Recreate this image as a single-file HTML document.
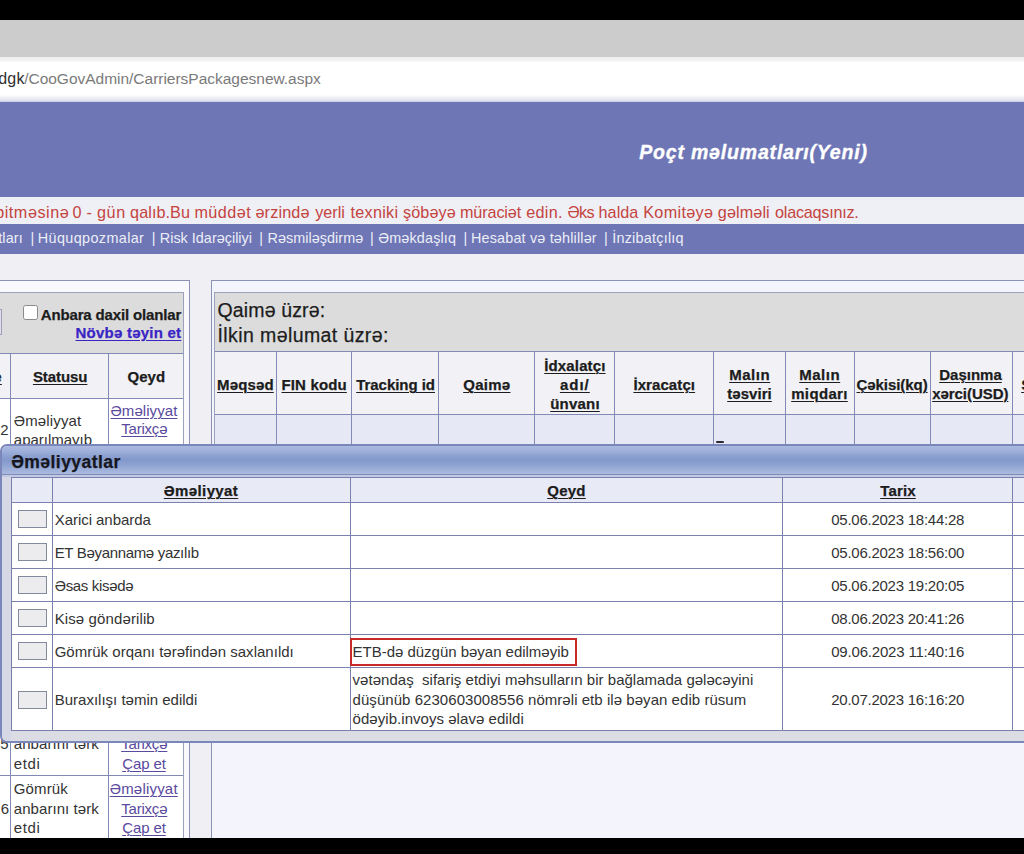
<!DOCTYPE html>
<html lang="az"><head><meta charset="utf-8"><title>Poçt məlumatları(Yeni)</title>
<style>
html,body{margin:0;padding:0;width:1024px;height:854px;overflow:hidden;}
#root{width:1024px;height:854px;overflow:hidden;position:relative;background:#f0f0f4;font-family:"Liberation Sans",Arial,sans-serif;}
.a{position:absolute;box-sizing:border-box;}
.t{position:absolute;white-space:nowrap;line-height:1;}
.btn{position:absolute;box-sizing:border-box;width:29px;height:18px;left:18px;background:#ececef;border:1px solid #838a9e;}
</style></head><body>
<div id="root">
<!-- browser chrome -->
<div class="a" style="left:0;top:0;width:1024px;height:20px;background:#000"></div>
<div class="a" style="left:0;top:20px;width:1024px;height:37px;background:#cccccc"></div>
<div class="a" style="left:0;top:57px;width:1024px;height:45px;background:linear-gradient(#ededed 0,#f4f4f4 4px,#ffffff 5px,#ffffff 38px,#f3f3f6 40px,#e4e6f0 43px,#c9cde4 45px)"></div>
<!-- app header -->
<div class="a" style="left:0;top:102px;width:1024px;height:95px;background:#6e76b5"></div>
<div class="a" style="left:0;top:197px;width:1024px;height:27px;background:#efeff6"></div>
<div class="a" style="left:0;top:224px;width:1024px;height:30px;background:#6e76b5"></div>

<!-- left panel -->
<div class="a" style="left:-10px;top:280px;width:200px;height:600px;background:#f8f8fd;border:1px solid #8c92b6"></div>
<div class="a" style="left:-10px;top:292px;width:194px;height:600px;background:#ffffff;border:1px solid #9da2bc"></div>
<div class="a" style="left:-10px;top:293px;width:193px;height:60px;background:#dcdcdc"></div>
<div class="a" style="left:-10px;top:309px;width:12px;height:26px;background:#dedeea;border:1px solid #a0a0bc"></div>
<div class="a" style="left:23px;top:305px;width:15px;height:15px;background:#fff;border:1px solid #8a8a8a;border-radius:2.5px"></div>
<div class="a" style="left:-10px;top:353px;width:193px;height:46px;background:#f2f2f6;border-top:1px solid #8289b4;border-bottom:1px solid #8289b4"></div>
<div class="a" style="left:10px;top:353px;width:1px;height:500px;background:#8289b4"></div>
<div class="a" style="left:108px;top:353px;width:1px;height:500px;background:#8289b4"></div>
<div class="a" style="left:-10px;top:775px;width:193px;height:1px;background:#8289b4"></div>

<!-- right panel -->
<div class="a" style="left:211px;top:280px;width:900px;height:600px;background:#f4f5fc;border:1px solid #8c92b6"></div>
<div class="a" style="left:214px;top:292px;width:900px;height:200px;background:#eceef8;border:1px solid #9da2bc"></div>
<div class="a" style="left:215px;top:293px;width:900px;height:58px;background:#dcdcdc"></div>
<div class="a" style="left:215px;top:351px;width:900px;height:64px;background:#f2f2f6;border-top:1px solid #8289b4;border-bottom:1px solid #8289b4"></div>
<div class="a" style="left:215px;top:415px;width:900px;height:40px;background:#e6e8f5"></div>
<div class="a" style="left:276px;top:351px;width:1px;height:100px;background:#8289b4"></div>
<div class="a" style="left:351px;top:351px;width:1px;height:100px;background:#8289b4"></div>
<div class="a" style="left:438px;top:351px;width:1px;height:100px;background:#8289b4"></div>
<div class="a" style="left:534px;top:351px;width:1px;height:100px;background:#8289b4"></div>
<div class="a" style="left:614px;top:351px;width:1px;height:100px;background:#8289b4"></div>
<div class="a" style="left:713px;top:351px;width:1px;height:100px;background:#8289b4"></div>
<div class="a" style="left:785px;top:351px;width:1px;height:100px;background:#8289b4"></div>
<div class="a" style="left:854px;top:351px;width:1px;height:100px;background:#8289b4"></div>
<div class="a" style="left:930px;top:351px;width:1px;height:100px;background:#8289b4"></div>
<div class="a" style="left:1012px;top:351px;width:1px;height:100px;background:#8289b4"></div>

<div class="a" style="left:716px;top:441px;width:8px;height:2px;background:#2a2a30;border-radius:1px"></div>

<span class="t" style="left:-1.80px;top:71.02px;font-size:16px;color:#303030;letter-spacing:0.268px;">dgk</span>
<span class="t" style="left:24.20px;top:71.02px;font-size:15.5px;color:#7a7a7a;letter-spacing:-0.017px;">/CooGovAdmin/CarriersPackagesnew.aspx</span>
<span class="t" style="left:639.20px;top:143.02px;font-size:19.5px;color:#ffffff;font-weight:bold;font-style:italic;letter-spacing:0.819px;-webkit-text-stroke:0.35px #fff;">Poçt məlumatları(Yeni)</span>
<span class="t" style="left:-4.80px;top:204.03px;font-size:16.2px;color:#c4443e;letter-spacing:0.524px;">bitməsinə</span>
<span class="t" style="left:72.40px;top:204.03px;font-size:16.2px;color:#c4443e;letter-spacing:0.384px;">0</span>
<span class="t" style="left:86.50px;top:204.03px;font-size:16.2px;color:#c4443e;letter-spacing:0.709px;">-</span>
<span class="t" style="left:96.90px;top:204.03px;font-size:16.2px;color:#c4443e;letter-spacing:0.628px;">gün</span>
<span class="t" style="left:130.10px;top:204.03px;font-size:16.2px;color:#c4443e;letter-spacing:0.062px;">qalıb.Bu</span>
<span class="t" style="left:194.40px;top:204.03px;font-size:16.2px;color:#c4443e;letter-spacing:0.450px;">müddət</span>
<span class="t" style="left:255.40px;top:204.03px;font-size:16.2px;color:#c4443e;letter-spacing:0.172px;">ərzində</span>
<span class="t" style="left:315.30px;top:204.03px;font-size:16.2px;color:#c4443e;letter-spacing:-0.038px;">yerli</span>
<span class="t" style="left:350.40px;top:204.03px;font-size:16.2px;color:#c4443e;letter-spacing:0.301px;">texniki</span>
<span class="t" style="left:403.00px;top:204.03px;font-size:16.2px;color:#c4443e;letter-spacing:0.099px;">şöbəyə</span>
<span class="t" style="left:460.00px;top:204.03px;font-size:16.2px;color:#c4443e;letter-spacing:-0.122px;">müraciət</span>
<span class="t" style="left:526.30px;top:204.03px;font-size:16.2px;color:#c4443e;letter-spacing:0.278px;">edin.</span>
<span class="t" style="left:567.40px;top:204.03px;font-size:16.2px;color:#c4443e;letter-spacing:-0.592px;">Əks</span>
<span class="t" style="left:598.60px;top:204.03px;font-size:16.2px;color:#c4443e;letter-spacing:0.018px;">halda</span>
<span class="t" style="left:643.20px;top:204.03px;font-size:16.2px;color:#c4443e;letter-spacing:0.327px;">Komitəyə</span>
<span class="t" style="left:717.80px;top:204.03px;font-size:16.2px;color:#c4443e;letter-spacing:0.100px;">gəlməli</span>
<span class="t" style="left:775.00px;top:204.03px;font-size:16.2px;color:#c4443e;letter-spacing:-0.233px;">olacaqsınız.</span>
<span class="t" style="left:-1.80px;top:231.03px;font-size:14.4px;color:#eceef8;letter-spacing:0.120px;">tları</span>
<span class="t" style="left:37.80px;top:231.03px;font-size:14.4px;color:#eceef8;letter-spacing:0.377px;">Hüquqpozmalar</span>
<span class="t" style="left:159.80px;top:231.03px;font-size:14.4px;color:#eceef8;letter-spacing:0.014px;">Risk Idarəçiliyi</span>
<span class="t" style="left:267.50px;top:231.03px;font-size:14.4px;color:#eceef8;letter-spacing:0.050px;">Rəsmiləşdirmə</span>
<span class="t" style="left:378.20px;top:231.03px;font-size:14.4px;color:#eceef8;letter-spacing:0.158px;">Əməkdaşlıq</span>
<span class="t" style="left:471.00px;top:231.03px;font-size:14.4px;color:#eceef8;letter-spacing:0.170px;">Hesabat və təhlillər</span>
<span class="t" style="left:612.20px;top:231.03px;font-size:14.4px;color:#eceef8;letter-spacing:0.234px;">İnzibatçılıq</span>
<span class="t" style="left:30.40px;top:231.03px;font-size:14.4px;color:#eceef8;letter-spacing:0.450px;">|</span>
<span class="t" style="left:151.70px;top:231.03px;font-size:14.4px;color:#eceef8;letter-spacing:0.450px;">|</span>
<span class="t" style="left:259.30px;top:231.03px;font-size:14.4px;color:#eceef8;letter-spacing:0.450px;">|</span>
<span class="t" style="left:369.90px;top:231.03px;font-size:14.4px;color:#eceef8;letter-spacing:0.450px;">|</span>
<span class="t" style="left:463.60px;top:231.03px;font-size:14.4px;color:#eceef8;letter-spacing:0.450px;">|</span>
<span class="t" style="left:603.90px;top:231.03px;font-size:14.4px;color:#eceef8;letter-spacing:0.450px;">|</span>
<span class="t" style="left:40.70px;top:307.02px;font-size:15px;color:#1c1c1c;font-weight:bold;-webkit-text-stroke:0.25px;letter-spacing:-0.140px;">Anbara daxil olanlar</span>
<a class="t" href="#" style="left:75.50px;top:325.02px;font-size:15px;color:#3a25c4;font-weight:bold;text-decoration:underline;text-underline-offset:1.8px;text-decoration-thickness:1.4px;-webkit-text-stroke:0.25px;letter-spacing:0.233px;">Növbə təyin et</a>
<span class="t" style="left:32.90px;top:369.02px;font-size:15px;color:#1c1c1c;font-weight:bold;text-decoration:underline;text-underline-offset:1.8px;text-decoration-thickness:1.4px;-webkit-text-stroke:0.25px;letter-spacing:-0.074px;">Statusu</span>
<span class="t" style="left:127.50px;top:369.02px;font-size:15px;color:#1c1c1c;font-weight:bold;-webkit-text-stroke:0.25px;letter-spacing:0.046px;">Qeyd</span>
<span class="t" style="left:-6.80px;top:369.02px;font-size:15px;color:#1c1c1c;font-weight:bold;text-decoration:underline;text-underline-offset:1.8px;text-decoration-thickness:1.4px;-webkit-text-stroke:0.25px;letter-spacing:0.256px;">e</span>
<span class="t" style="left:13.80px;top:413.02px;font-size:15px;color:#333333;letter-spacing:0.143px;">Əməliyyat</span>
<span class="t" style="left:13.80px;top:432.02px;font-size:15px;color:#333333;letter-spacing:-0.007px;">aparılmayıb</span>
<span class="t" style="left:0.20px;top:422.02px;font-size:15px;color:#333333;letter-spacing:0.256px;">2</span>
<a class="t" href="#" style="left:110.50px;top:403.02px;font-size:15px;color:#5a4a9e;text-decoration:underline;text-underline-offset:2.2px;text-decoration-thickness:1.1px;letter-spacing:0.065px;">Əməliyyat</a>
<a class="t" href="#" style="left:121.20px;top:421.02px;font-size:15px;color:#5a4a9e;text-decoration:underline;text-underline-offset:2.2px;text-decoration-thickness:1.1px;letter-spacing:-0.202px;">Tarixçə</a>
<span class="t" style="left:0.20px;top:736.02px;font-size:15px;color:#333333;letter-spacing:0.256px;">5</span>
<span class="t" style="left:13.80px;top:736.02px;font-size:15px;color:#333333;letter-spacing:0.060px;">anbarını tərk</span>
<span class="t" style="left:13.80px;top:756.02px;font-size:15px;color:#333333;letter-spacing:0.578px;">etdi</span>
<a class="t" href="#" style="left:121.20px;top:736.02px;font-size:15px;color:#5a4a9e;text-decoration:underline;text-underline-offset:2.2px;text-decoration-thickness:1.1px;letter-spacing:-0.202px;">Tarixçə</a>
<a class="t" href="#" style="left:122.20px;top:756.02px;font-size:15px;color:#5a4a9e;text-decoration:underline;text-underline-offset:2.2px;text-decoration-thickness:1.1px;letter-spacing:-0.101px;">Çap et</a>
<span class="t" style="left:13.80px;top:781.02px;font-size:15px;color:#333333;letter-spacing:0.109px;">Gömrük</span>
<span class="t" style="left:13.80px;top:801.02px;font-size:15px;color:#333333;letter-spacing:0.060px;">anbarını tərk</span>
<span class="t" style="left:13.80px;top:820.02px;font-size:15px;color:#333333;letter-spacing:0.578px;">etdi</span>
<span class="t" style="left:0.70px;top:801.02px;font-size:15px;color:#333333;letter-spacing:-0.244px;">6</span>
<a class="t" href="#" style="left:109.70px;top:781.02px;font-size:15px;color:#5a4a9e;text-decoration:underline;text-underline-offset:2.2px;text-decoration-thickness:1.1px;letter-spacing:0.199px;">Əməliyyat</a>
<a class="t" href="#" style="left:121.20px;top:801.02px;font-size:15px;color:#5a4a9e;text-decoration:underline;text-underline-offset:2.2px;text-decoration-thickness:1.1px;letter-spacing:-0.202px;">Tarixçə</a>
<a class="t" href="#" style="left:122.20px;top:820.02px;font-size:15px;color:#5a4a9e;text-decoration:underline;text-underline-offset:2.2px;text-decoration-thickness:1.1px;letter-spacing:-0.101px;">Çap et</a>
<span class="t" style="left:217.50px;top:301.02px;font-size:19.5px;color:#1c1c1c;letter-spacing:0.136px;-webkit-text-stroke:0.25px;">Qaimə üzrə:</span>
<span class="t" style="left:217.50px;top:326.02px;font-size:19.5px;color:#1c1c1c;letter-spacing:0.403px;-webkit-text-stroke:0.25px;">İlkin məlumat üzrə:</span>
<span class="t" style="left:217.10px;top:377.02px;font-size:15px;color:#1c1c1c;font-weight:bold;text-decoration:underline;text-underline-offset:1.8px;text-decoration-thickness:1.4px;-webkit-text-stroke:0.25px;letter-spacing:0.140px;">Məqsəd</span>
<span class="t" style="left:281.50px;top:377.02px;font-size:15px;color:#1c1c1c;font-weight:bold;text-decoration:underline;text-underline-offset:1.8px;text-decoration-thickness:1.4px;-webkit-text-stroke:0.25px;letter-spacing:0.141px;">FIN kodu</span>
<span class="t" style="left:356.20px;top:377.02px;font-size:15px;color:#1c1c1c;font-weight:bold;text-decoration:underline;text-underline-offset:1.8px;text-decoration-thickness:1.4px;-webkit-text-stroke:0.25px;letter-spacing:-0.037px;">Tracking id</span>
<span class="t" style="left:463.20px;top:377.02px;font-size:15px;color:#1c1c1c;font-weight:bold;text-decoration:underline;text-underline-offset:1.8px;text-decoration-thickness:1.4px;-webkit-text-stroke:0.25px;letter-spacing:0.288px;">Qaimə</span>
<span class="t" style="left:544.20px;top:358.02px;font-size:15px;color:#1c1c1c;font-weight:bold;text-decoration:underline;text-underline-offset:1.8px;text-decoration-thickness:1.4px;-webkit-text-stroke:0.25px;letter-spacing:0.152px;">İdxalatçı</span>
<span class="t" style="left:559.90px;top:377.02px;font-size:15px;color:#1c1c1c;font-weight:bold;text-decoration:underline;text-underline-offset:1.8px;text-decoration-thickness:1.4px;-webkit-text-stroke:0.25px;letter-spacing:1.014px;">adı/</span>
<span class="t" style="left:550.20px;top:396.02px;font-size:15px;color:#1c1c1c;font-weight:bold;text-decoration:underline;text-underline-offset:1.8px;text-decoration-thickness:1.4px;-webkit-text-stroke:0.25px;letter-spacing:0.209px;">ünvanı</span>
<span class="t" style="left:633.40px;top:377.02px;font-size:15px;color:#1c1c1c;font-weight:bold;text-decoration:underline;text-underline-offset:1.8px;text-decoration-thickness:1.4px;-webkit-text-stroke:0.25px;letter-spacing:0.090px;">İxracatçı</span>
<span class="t" style="left:729.20px;top:367.02px;font-size:15px;color:#1c1c1c;font-weight:bold;text-decoration:underline;text-underline-offset:1.8px;text-decoration-thickness:1.4px;-webkit-text-stroke:0.25px;letter-spacing:0.531px;">Malın</span>
<span class="t" style="left:727.20px;top:386.02px;font-size:15px;color:#1c1c1c;font-weight:bold;text-decoration:underline;text-underline-offset:1.8px;text-decoration-thickness:1.4px;-webkit-text-stroke:0.25px;letter-spacing:0.057px;">təsviri</span>
<span class="t" style="left:799.20px;top:367.02px;font-size:15px;color:#1c1c1c;font-weight:bold;text-decoration:underline;text-underline-offset:1.8px;text-decoration-thickness:1.4px;-webkit-text-stroke:0.25px;letter-spacing:0.531px;">Malın</span>
<span class="t" style="left:791.20px;top:386.02px;font-size:15px;color:#1c1c1c;font-weight:bold;text-decoration:underline;text-underline-offset:1.8px;text-decoration-thickness:1.4px;-webkit-text-stroke:0.25px;letter-spacing:0.345px;">miqdarı</span>
<span class="t" style="left:856.50px;top:377.02px;font-size:15px;color:#1c1c1c;font-weight:bold;text-decoration:underline;text-underline-offset:1.8px;text-decoration-thickness:1.4px;-webkit-text-stroke:0.25px;letter-spacing:-0.060px;">Çəkisi(kq)</span>
<span class="t" style="left:939.20px;top:367.02px;font-size:15px;color:#1c1c1c;font-weight:bold;text-decoration:underline;text-underline-offset:1.8px;text-decoration-thickness:1.4px;-webkit-text-stroke:0.25px;letter-spacing:0.010px;">Daşınma</span>
<span class="t" style="left:932.20px;top:386.02px;font-size:15px;color:#1c1c1c;font-weight:bold;text-decoration:underline;text-underline-offset:1.8px;text-decoration-thickness:1.4px;-webkit-text-stroke:0.25px;letter-spacing:-0.050px;">xərci(USD)</span>
<span class="t" style="left:1021.20px;top:377.02px;font-size:15px;color:#1c1c1c;font-weight:bold;text-decoration:underline;text-underline-offset:1.8px;text-decoration-thickness:1.4px;-webkit-text-stroke:0.25px;letter-spacing:1.584px;">S</span>

<!-- modal -->
<div class="a" style="left:0;top:444px;width:1100px;height:299px;background:#dcdde4;border:2px solid #7b86ba;border-radius:7px;overflow:hidden">
  <div class="a" style="left:0;top:0;width:1100px;height:29px;background:linear-gradient(#aab9df 0,#9fb0da 5px,#8a9fd0 11px,#8399cb 14px,#8ea3d2 19px,#a6b6dc 26px,#abbade 28px);border-bottom:1px solid #7f8bb8"></div>
  <div class="a" style="left:0;top:29px;width:1100px;height:2px;background:#c3c9e2"></div>
  <div class="a" style="left:0;top:31px;width:9px;height:270px;background:#d6d9e5"></div>
</div>
<div class="a" style="left:11px;top:477px;width:1100px;height:254px;background:#fff;border:1px solid #7a81ae"></div>
<div class="a" style="left:12px;top:478px;width:1100px;height:24px;background:#e8eaf6"></div>
<div class="a" style="left:52px;top:477px;width:1px;height:254px;background:#7a81ae"></div>
<div class="a" style="left:350px;top:477px;width:1px;height:254px;background:#7a81ae"></div>
<div class="a" style="left:782px;top:477px;width:1px;height:254px;background:#7a81ae"></div>
<div class="a" style="left:1012px;top:477px;width:1px;height:254px;background:#7a81ae"></div>
<div class="a" style="left:11px;top:502px;width:1100px;height:1px;background:#7a81ae"></div>
<div class="a" style="left:11px;top:535px;width:1100px;height:1px;background:#7a81ae"></div>
<div class="a" style="left:11px;top:568px;width:1100px;height:1px;background:#7a81ae"></div>
<div class="a" style="left:11px;top:601px;width:1100px;height:1px;background:#7a81ae"></div>
<div class="a" style="left:11px;top:634px;width:1100px;height:1px;background:#7a81ae"></div>
<div class="a" style="left:11px;top:667px;width:1100px;height:1px;background:#7a81ae"></div>

<div class="btn" style="top:510px"></div>
<div class="btn" style="top:543px"></div>
<div class="btn" style="top:576px"></div>
<div class="btn" style="top:609px"></div>
<div class="btn" style="top:642px"></div>
<div class="btn" style="top:691px"></div>

<div class="a" style="left:350px;top:638px;width:227px;height:28px;border:2px solid #c82a2a"></div>
<span class="t" style="left:11.20px;top:454.02px;font-size:17.5px;color:#16161e;font-weight:bold;-webkit-text-stroke:0.25px;letter-spacing:0.454px;">Əməliyyatlar</span>
<span class="t" style="left:163.80px;top:483.02px;font-size:15px;color:#1c1c1c;font-weight:bold;text-decoration:underline;text-underline-offset:1.8px;text-decoration-thickness:1.4px;-webkit-text-stroke:0.25px;letter-spacing:0.385px;">Əməliyyat</span>
<span class="t" style="left:547.20px;top:483.02px;font-size:15px;color:#1c1c1c;font-weight:bold;text-decoration:underline;text-underline-offset:1.8px;text-decoration-thickness:1.4px;-webkit-text-stroke:0.25px;letter-spacing:0.271px;">Qeyd</span>
<span class="t" style="left:880.20px;top:483.02px;font-size:15px;color:#1c1c1c;font-weight:bold;text-decoration:underline;text-underline-offset:1.8px;text-decoration-thickness:1.4px;-webkit-text-stroke:0.25px;letter-spacing:0.170px;">Tarix</span>
<span class="t" style="left:54.70px;top:512.02px;font-size:15px;color:#333333;letter-spacing:-0.045px;">Xarici anbarda</span>
<span class="t" style="left:831.20px;top:512.02px;font-size:15px;color:#333333;letter-spacing:-0.244px;">05.06.2023 18:44:28</span>
<span class="t" style="left:54.70px;top:545.02px;font-size:15px;color:#333333;letter-spacing:-0.327px;">ET Bəyannamə yazılıb</span>
<span class="t" style="left:831.20px;top:545.02px;font-size:15px;color:#333333;letter-spacing:-0.244px;">05.06.2023 18:56:00</span>
<span class="t" style="left:54.70px;top:578.02px;font-size:15px;color:#333333;letter-spacing:-0.323px;">Əsas kisədə</span>
<span class="t" style="left:831.20px;top:578.02px;font-size:15px;color:#333333;letter-spacing:-0.244px;">05.06.2023 19:20:05</span>
<span class="t" style="left:54.70px;top:611.02px;font-size:15px;color:#333333;letter-spacing:0.113px;">Kisə göndərilib</span>
<span class="t" style="left:831.20px;top:611.02px;font-size:15px;color:#333333;letter-spacing:-0.244px;">08.06.2023 20:41:26</span>
<span class="t" style="left:54.70px;top:644.02px;font-size:15px;color:#333333;letter-spacing:0.018px;">Gömrük orqanı tərəfindən saxlanıldı</span>
<span class="t" style="left:831.20px;top:644.02px;font-size:15px;color:#333333;letter-spacing:-0.186px;">09.06.2023 11:40:16</span>
<span class="t" style="left:54.70px;top:692.02px;font-size:15px;color:#333333;letter-spacing:0.002px;">Buraxılışı təmin edildi</span>
<span class="t" style="left:831.20px;top:692.02px;font-size:15px;color:#333333;letter-spacing:-0.244px;">20.07.2023 16:16:20</span>
<span class="t" style="left:352.60px;top:644.02px;font-size:15px;color:#333333;letter-spacing:-0.021px;">ETB-də düzgün bəyan edilməyib</span>
<span class="t" style="left:352.60px;top:672.02px;font-size:15px;color:#333333;letter-spacing:0.022px;">vətəndaş &nbsp;sifariş etdiyi məhsulların bir bağlamada gələcəyini</span>
<span class="t" style="left:352.60px;top:692.02px;font-size:15px;color:#333333;letter-spacing:0.048px;">düşünüb 6230603008556 nömrəli etb ilə bəyan edib rüsum</span>
<span class="t" style="left:352.60px;top:711.02px;font-size:15px;color:#333333;letter-spacing:0.042px;">ödəyib.invoys əlavə edildi</span>

<div class="a" style="left:0;top:838px;width:1024px;height:16px;background:#000"></div>
</div>
</body></html>
